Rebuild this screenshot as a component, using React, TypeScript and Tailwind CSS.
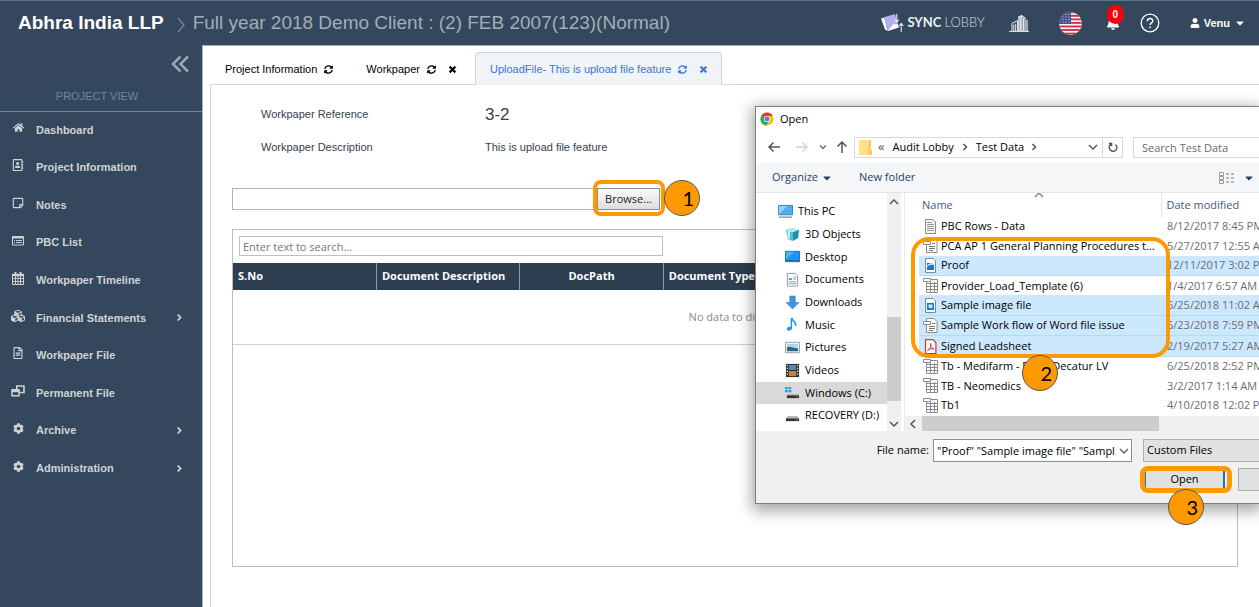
import type { ReactNode } from "react";
import {
  FaHome,
  FaRegAddressBook,
  FaRegStickyNote,
  FaCubes,
  FaRegFileAlt,
  FaCog,
  FaAngleRight,
  FaSyncAlt,
  FaTimes,
  FaBell,
  FaUser,
  FaCaretDown,
} from "react-icons/fa";

function WindowsIcon() {
  return (
    <svg viewBox="0 0 14 12" className="h-3 w-[14px]" fill="none" stroke="currentColor">
      <path d="M5.800 1h7.200v6.500H5.800z" strokeWidth="1.600" />
      <path d="M1 4.800h7v6H1z" strokeWidth="1.500" fill="#34475d" />
      <path d="M1 6h7" strokeWidth="2.400" />
    </svg>
  );
}

function ListIcon() {
  return (
    <svg viewBox="0 0 12 10" className="h-[10px] w-3" fill="none" stroke="currentColor">
      <path d="M.5.5h11v8.500H.5z" />
      <path d="M0 1.500h12" strokeWidth="2" />
      <path d="M2 4.500h1M4 4.500h6M2 6.500h1M4 6.500h6" />
    </svg>
  );
}

function CalendarIcon() {
  return (
    <svg viewBox="0 0 12 13" className="h-[13px] w-3" fill="none" stroke="currentColor">
      <path d="M.5 2.500h11v10H.5z" />
      <path d="M0 3h12" strokeWidth="2.400" />
      <path d="M3.500 0v3M8.500 0v3" strokeWidth="2" />
      <path d="M1 6.500h10M1 9.500h10M3.500 4v8M6 4v8M8.500 4v8" strokeWidth=".9" />
    </svg>
  );
}

const menu: { label: string; icon: ReactNode; sub?: boolean }[] = [
  { label: "Dashboard", icon: <FaHome size={11} /> },
  { label: "Project Information", icon: <FaRegAddressBook size={12} /> },
  { label: "Notes", icon: <FaRegStickyNote size={12} /> },
  { label: "PBC List", icon: <ListIcon /> },
  { label: "Workpaper Timeline", icon: <CalendarIcon /> },
  { label: "Financial Statements", icon: <FaCubes size={14} />, sub: true },
  { label: "Workpaper File", icon: <FaRegFileAlt size={12} /> },
  { label: "Permanent File", icon: <WindowsIcon /> },
  { label: "Archive", icon: <FaCog size={11} />, sub: true },
  { label: "Administration", icon: <FaCog size={11} />, sub: true },
];

function SyncLogo() {
  return (
    <svg viewBox="0 0 23 20" className="h-5 w-[23px]">
      <path d="M0 5.500 3.500 4.400 6.500 18 4 16.500z" fill="#fff" />
      <path d="M3 4.200 14 1l3.800 13.600L6.600 18z" fill="#b3aef0" />
      <path d="M6.600 18 17.800 14.600 16.800 11 12 11.500z" fill="#fff" />
      <path d="M15.800 1v8M13.600 6.600l2.200 2.600L18 6.600M20.200 19v-8.400M18 13l2.200-2.600 2.200 2.600" fill="none" stroke="#e8ebf0" strokeWidth="1.100" />
    </svg>
  );
}

function Buildings() {
  return (
    <svg viewBox="0 0 20 17" className="h-[17px] w-5" fill="none" stroke="#e9edf1">
      <path d="M0 16.400h20" strokeWidth="1" />
      <path d="M3 16V8.400L8.600 5.600V16M4.800 9.600V16M6.700 8.600V16" strokeWidth="1" />
      <path d="M9.800 16V2l3-1.400V16M11.300 2v14" strokeWidth="1.200" />
      <path d="M12.800 1l3.200 2v13M14.400 3v13M18 5v11" strokeWidth="1.200" />
    </svg>
  );
}

function Flag() {
  const stars = [4, 7, 10];
  return (
    <svg viewBox="0 0 23 23" className="size-[23px]">
      <clipPath id="flag-round">
        <circle cx="11.5" cy="11.5" r="11.3" />
      </clipPath>
      <g clipPath="url(#flag-round)">
        <rect width="23" height="23" fill="#f7f3f5" />
        {[0, 1, 2, 3, 4, 5, 6].map((i) => (
          <rect key={i} x="0" y={i * 3.54 - 0.6} width="23" height="1.8" fill="#d22c45" />
        ))}
        <rect width="12" height="12" fill="#46518c" />
        {[2.5, 5, 7.5, 10].map((y) => stars.map((x) => <circle key={`${x}-${y}`} cx={x} cy={y} r=".6" fill="#dfe3f3" />))}
      </g>
    </svg>
  );
}

function Header() {
  return (
    <header className="flex h-[45px] shrink-0 items-center border-t border-[#5d7485] bg-[#34475d] pr-[13px] pl-[18px]">
      <h1 className="text-[19px] font-bold whitespace-nowrap text-white">Abhra India LLP</h1>
      <svg viewBox="0 0 8 16" className="mt-1 mr-2 ml-[13px] h-4 w-2 shrink-0" fill="none" stroke="#7b8998">
        <path d="m1 1 6 7-6 7" strokeWidth="1.200" />
      </svg>
      <span className="text-[19px] whitespace-nowrap text-[#a3adb7]">
        Full year 2018 Demo Client : (2) FEB 2007(123)(Normal)
      </span>
      <div className="ml-auto flex shrink-0 items-center text-white">
        <a href="#lobby" className="flex items-center gap-[3px] font-['Lato',sans-serif] text-[13px]">
          <SyncLogo />
          <span className="font-bold text-[#eceff2]">
            SYNC <span className="font-light text-[#d3d9e0]">LOBBY</span>
          </span>
        </a>
        <button aria-label="Company" className="ml-6">
          <Buildings />
        </button>
        <button aria-label="Language" className="ml-[30px]">
          <Flag />
        </button>
        <button aria-label="Notifications" className="relative ml-6">
          <FaBell size={14} />
          <span className="absolute -top-[11px] left-[1px] flex h-[19px] w-[17px] items-center justify-center rounded-full bg-[#fb0007] text-[10px] font-bold">
            0
          </span>
        </button>
        <button aria-label="Help" className="ml-5">
          <svg viewBox="0 0 20 20" className="size-5" fill="none" stroke="#fff">
            <circle cx="10" cy="10" r="8.8" strokeWidth="1.300" />
            <path d="M7.300 8.200c0-3.600 5.500-3.500 5.500-.3 0 2-2.700 2-2.700 4.200" strokeWidth="1.400" />
            <path d="M10.100 13.400v1.600" strokeWidth="1.500" />
          </svg>
        </button>
        <button className="ml-[30px] flex items-center gap-1 text-[11px] font-bold">
          <FaUser size={10} />
          Venu
          <FaCaretDown size={12} />
        </button>
      </div>
    </header>
  );
}

function Sidebar() {
  return (
    <aside className="flex w-[203px] shrink-0 flex-col border-r border-[#aab8c4] bg-[#34475d]">
      <div className="flex h-[38px] items-center justify-end pr-[13px]">
        <button aria-label="Collapse menu" className="text-[#98a5b3]">
          <svg viewBox="0 0 18 18" className="size-[18px]" fill="none" stroke="currentColor" strokeWidth="2.600">
            <path d="M9.500 1.500 2 9l7.500 7.500M17 1.500 9.500 9l7.500 7.500" />
          </svg>
        </button>
      </div>
      <h2 className="flex h-[29px] items-center justify-center border-b border-[#6d87a0] pr-2 pb-[2px] text-[11px] text-[#6d89a3]">
        PROJECT VIEW
      </h2>
      <nav className="flex h-[376px] flex-col">
        {menu.map((m) => (
          <a
            key={m.label}
            href="#menu"
            className="flex flex-1 items-center pr-[17px] pb-[2px] text-[11px] font-bold text-[#d0d2d4]"
          >
            <span className="flex w-9 items-center justify-center pb-1">{m.icon}</span>
            <span className="flex-1">{m.label}</span>
            {m.sub && <FaAngleRight size={11} />}
          </a>
        ))}
      </nav>
    </aside>
  );
}

function Tab({ label, closable, active }: { label: string; closable?: boolean; active?: boolean }) {
  return (
    <div
      className={
        active
          ? "-mb-px flex h-[33px] items-center gap-[7px] rounded-t border border-b-0 border-[#c6d5e3] bg-[#f0f4f8] pt-px pr-[13px] pl-[14px] text-[#3f73dc]"
          : "flex h-8 items-center gap-[7px] pt-[2px] pr-[18px] pl-[15px] text-black"
      }
    >
      <button>{label}</button>
      <button aria-label={`Refresh ${label}`}>
        <FaSyncAlt size={9} />
      </button>
      {closable && (
        <button aria-label={`Close ${label}`} className="ml-[5px]">
          <FaTimes size={9} strokeWidth={50} stroke="currentColor" />
        </button>
      )}
    </div>
  );
}

function Step({ n, className }: { n: number; className: string }) {
  return (
    <span
      className={`absolute flex size-9 items-center justify-end rounded-full border border-[#555] bg-[#ff9900] pr-[5px] font-['Lato',sans-serif] text-[20px] text-black ${className}`}
    >
      {n}
    </span>
  );
}

function UploadPage() {
  return (
    <main className="flex min-w-0 flex-1 flex-col border-t border-[#a0a8b8] bg-white pl-[7px] text-[11px]">
      <div className="flex h-[39px] items-end border-b border-[#d5dbe2]">
        <Tab label="Project Information" />
        <Tab label="Workpaper" closable />
        <Tab label="UploadFile- This is upload file feature" closable active />
      </div>
      <section className="flex flex-1 flex-col border-l border-[#c9d8e6] pr-[21px] pl-[21px]">
        <dl className="grid grid-cols-[224px_1fr] grid-rows-[33px_32px] items-center pt-[13px] pl-[29px] text-[#33424f]">
          <dt>Workpaper Reference</dt>
          <dd className="text-[17px]">3-2</dd>
          <dt>Workpaper Description</dt>
          <dd>This is upload file feature</dd>
        </dl>

        <div className="mt-[25px] flex w-[428px] font-['Open_Sans',sans-serif]">
          <input aria-label="Selected file" className="h-[22px] min-w-0 flex-1 border border-r-0 border-[#b4b4b4] px-1" />
          <div className="relative">
            <button className="h-[22px] w-[63px] border border-[#8c8c8c] bg-linear-to-b from-[#fafafa] to-[#dedede] text-[#222]">
              Browse...
            </button>
            <span className="pointer-events-none absolute -top-2 -right-[5px] -bottom-[6px] -left-1 rounded-lg border-4 border-[#ff9900]" />
            <Step n={1} className="-top-2 left-[67px]" />
          </div>
        </div>

        <div className="mt-[19px] h-[338px] border border-[#bdbdbd] font-['Open_Sans',sans-serif]">
          <div className="px-[6px] pt-[6px] pb-[7px]">
            <input
              aria-label="Search documents"
              placeholder="Enter text to search..."
              className="block h-5 w-[424px] border border-[#c0c0c0] px-[3px] text-[11px] placeholder:text-[#777]"
            />
          </div>
          <table className="w-full table-fixed border-collapse">
            <thead>
              <tr className="h-[27px] bg-[#2c3e50] text-left font-bold text-white">
                <th className="border-r border-[#8d979f] px-[5px]">S.No</th>
                <th className="border-r border-[#8d979f] px-[5px] whitespace-nowrap">Document Description</th>
                <th className="border-r border-[#8d979f] px-[5px] text-center">DocPath</th>
                <th className="border-r border-[#8d979f] px-[5px]">Document Type</th>
                <th className="border-r border-[#8d979f]" />
                <th className="border-r border-[#8d979f]" />
                <th />
              </tr>
            </thead>
            <tbody>
              <tr className="h-[54px] border-b border-[#cfcfcf]">
                <td colSpan={7} className="text-center text-[#8a8a8a]">
                  No data to display
                </td>
              </tr>
            </tbody>
          </table>
        </div>
      </section>
    </main>
  );
}

type Kind = "text" | "word" | "png" | "sheet" | "image" | "pdf";

function FileIcon({ kind }: { kind: Kind }) {
  return (
    <svg viewBox="0 0 15 15" className="size-[15px] shrink-0" fill="none">
      {kind === "text" && (
        <>
          <path d="M2.500.5h7.500l2.500 2.500v11.500h-10z" fill="#f4f4f4" stroke="#8b8b8b" />
          <path d="M4 3.500h5M4 5.500h7M4 7.500h7M4 9.500h7M4 11.500h7" stroke="#999" />
        </>
      )}
      {kind === "word" && (
        <>
          <path d="M3.500.5h7.500l3 3v11h-10.500z" fill="#fff" stroke="#8b8b8b" />
          <path d="M.5 3.500h7v3h-7z" fill="#fff" stroke="#8b8b8b" />
          <path d="M6 8.500h6M6 10.500h6M6 12.500h4M9 5.500h3" stroke="#777" />
        </>
      )}
      {kind === "sheet" && (
        <>
          <path d="M3.500 1.500h11v13h-11z" fill="#fff" stroke="#8b8b8b" />
          <path d="M3.500 5.500h11M3.500 8.500h11M3.500 11.500h11M7.500 4v10.500M11.500 4v10.500" stroke="#8b8b8b" />
          <path d="M.5.5h7v3h-7z" fill="#fff" stroke="#8b8b8b" />
        </>
      )}
      {(kind === "image" || kind === "png") && (
        <>
          <path d="M2.500.5h7.500l2.500 2.500v11.500h-10z" fill="#fff" stroke="#7d8b99" />
          <path d="M4 5h7v7H4z" fill="#1a76c9" />
          {kind === "png" ? (
            <path d="M4 8c2-3 4-3 7-3v2c-3-.5-5 0-7 2z" fill="#d5ebfc" />
          ) : (
            <path d="M5.500 6.500h4v3l-2 1-2-1.500z" fill="#d5ebfc" />
          )}
        </>
      )}
      {kind === "pdf" && (
        <>
          <path d="M2.500.6h7.500l2.900 3v10.900H2.500z" fill="#fff" stroke="#e3302f" strokeWidth="1.200" />
          <path d="M4.400 11.400c3-1.500 4-4.500 3-7 .2 3.500 1.600 5 3.800 5.400-2.600-.5-5 .2-6.800 1.600z" stroke="#e3302f" />
        </>
      )}
    </svg>
  );
}

const files: { name: string; date: string; kind: Kind; selected?: boolean }[] = [
  { name: "PBC Rows - Data", date: "8/12/2017 8:45 PM", kind: "text" },
  { name: "PCA AP 1 General Planning Procedures t...", date: "5/27/2017 12:55 AM", kind: "word" },
  { name: "Proof", date: "12/11/2017 3:02 PM", kind: "png", selected: true },
  { name: "Provider_Load_Template (6)", date: "1/4/2017 6:57 AM", kind: "sheet" },
  { name: "Sample image file", date: "6/25/2018 11:02 AM", kind: "image", selected: true },
  { name: "Sample Work flow of Word file issue", date: "6/23/2018 7:59 PM", kind: "word", selected: true },
  { name: "Signed Leadsheet", date: "2/19/2017 5:27 AM", kind: "pdf", selected: true },
  { name: "Tb - Medifarm - Fixed Decatur LV", date: "6/25/2018 2:52 PM", kind: "sheet" },
  { name: "TB - Neomedics", date: "3/2/2017 1:14 AM", kind: "sheet" },
  { name: "Tb1", date: "4/10/2018 12:02 PM", kind: "sheet" },
];

const places: { name: string; art: ReactNode; root?: boolean; selected?: boolean }[] = [
  {
    name: "This PC",
    root: true,
    art: (
      <>
        <path d="M.5 1.500h15v10H.5z" fill="#47b2f2" stroke="#3f7fae" />
        <path d="M1 11V2h9z" fill="#8fd3fa" />
        <path d="M1 14h14" stroke="#7f9bb0" strokeWidth="1.500" />
      </>
    ),
  },
  {
    name: "3D Objects",
    art: (
      <>
        <path d="m1 3 7-2 7 2-7 2z" fill="#a9e6ef" />
        <path d="m1 3 7 2.500V15l-5-2z" fill="#4fc3d6" />
        <path d="m15 3-7 2.500V15l6-3z" fill="#1794ab" />
        <path d="m3 3.500 2 .7v8.500l-2-.8z" fill="#d9f6fa" />
      </>
    ),
  },
  {
    name: "Desktop",
    art: (
      <>
        <path d="M.5 2.500h15v11H.5z" fill="#1b97f0" stroke="#0f6fb8" />
        <path d="M1 3h9L1 11z" fill="#4bb3f8" />
        <path d="M1 12.500h14" stroke="#0a5fa5" />
      </>
    ),
  },
  {
    name: "Documents",
    art: (
      <>
        <path d="M2.500 1.500h8.500l2.500 2.500v11h-11z" fill="#fff" stroke="#8b959d" />
        <path d="M4 6.500h3.500v2H4z" fill="#4c9ad4" />
        <path d="M9 5.500h3M9 7.500h3M4 10.500h8M4 12.500h8" stroke="#6fa4c9" />
      </>
    ),
  },
  { name: "Downloads", art: <path d="M5 1h6v7h4l-7 7-7-7h4z" fill="#3d94e0" stroke="#2b7cc4" strokeWidth=".5" /> },
  {
    name: "Music",
    art: (
      <>
        <path d="M7.500 1v11c0 3-5.500 3.500-5.500.8C2 10.800 4.500 10 6 10.600V1z" fill="#169bea" />
        <path d="M7 1c1 3.500 5 3.500 4.500 8.500" stroke="#169bea" strokeWidth="1.800" />
      </>
    ),
  },
  {
    name: "Pictures",
    art: (
      <>
        <path d="M.5 2.500h15v11H.5z" fill="#fff" stroke="#9a9a9a" />
        <path d="M2 4h12v8H2z" fill="#a9d6f2" />
        <path d="M2 8c3-2 6 1 12 1v3H2z" fill="#35657f" />
      </>
    ),
  },
  {
    name: "Videos",
    art: (
      <>
        <path d="M1 1h14v14H1z" fill="#2a2d33" />
        <path d="M4 2h8v5.500H4z" fill="#5b86b8" />
        <path d="M4 8.500h8V14H4z" fill="#c0862f" />
        <path d="M2.500 2v12M13.500 2v12" stroke="#e8e8e8" strokeWidth="1.200" strokeDasharray="1.500 1.500" />
      </>
    ),
  },
  {
    name: "Windows (C:)",
    selected: true,
    art: (
      <>
        <path d="M0 2h3v2.500H0zM3.700 2h3v2.500h-3zM0 5.200h3v2.500H0zM3.700 5.200h3v2.500h-3z" fill="#1fa5e8" />
        <path d="M3 9.500h11l1 1.500H2z" fill="#b9b9b9" />
        <path d="M2 11h13v3H2z" fill="#333" />
        <path d="M12 12.500h1.500" stroke="#3fe03f" />
      </>
    ),
  },
  {
    name: "RECOVERY (D:)",
    art: (
      <>
        <path d="M3 8.500h10l2 2.500H1z" fill="#b9b9b9" />
        <path d="M1 11h14v3H1z" fill="#333" />
        <path d="M12 12.500h1.500" stroke="#3fe03f" />
      </>
    ),
  },
];

function Chevron({ dir, className }: { dir: "down" | "up" | "left" | "right"; className?: string }) {
  const d = { down: "m1 3 4 4 4-4", up: "m1 7 4-4 4 4", left: "M7 1 3 5l4 4", right: "m3.500 2 3 3-3 3" }[dir];
  return (
    <svg viewBox="0 0 10 10" className={`size-[10px] shrink-0 ${className ?? ""}`} fill="none" stroke="currentColor" strokeWidth="1.500">
      <path d={d} />
    </svg>
  );
}

function Arrow({ className }: { className: string }) {
  return (
    <svg viewBox="0 0 12 12" className={`size-3 ${className}`} fill="none" stroke="currentColor" strokeWidth="1.500">
      <path d="M12 6H1M5.500 1.500 1 6l4.500 4.500" />
    </svg>
  );
}

function OpenDialog() {
  return (
    <div
      role="dialog"
      aria-label="Open"
      className="absolute top-[106px] right-0 left-[755px] border border-r-0 border-[#7f7f7f] bg-white font-['Open_Sans',sans-serif] text-[11px] text-black shadow-[0_4px_14px_3px_rgba(0,0,0,0.35)]"
    >
      <div className="flex h-6 items-center gap-[6px] pl-1">
        <svg viewBox="0 0 14 14" className="size-[14px]">
          <circle cx="7" cy="7" r="6.5" fill="#fbc116" />
          <path d="M7 7 1.400 3.700A6.500 6.500 0 0 1 12.700 4H7z" fill="#e33b2e" />
          <path d="M1.400 3.700A6.500 6.500 0 0 0 6.300 13.500L9 8.500 7 7z" fill="#2da94f" />
          <circle cx="7" cy="7" r="3.1" fill="#fff" />
          <circle cx="7" cy="7" r="2.4" fill="#3e82f1" />
        </svg>
        <span>Open</span>
      </div>

      <div className="flex h-8 items-center overflow-hidden text-[#555]">
        <button aria-label="Back" className="ml-3">
          <Arrow className="" />
        </button>
        <button aria-label="Forward" className="ml-4 text-[#d0d0d0]">
          <Arrow className="rotate-180" />
        </button>
        <button aria-label="Recent locations" className="ml-[10px]">
          <Chevron dir="down" className="scale-75" />
        </button>
        <button aria-label="Up" className="ml-2">
          <Arrow className="rotate-90" />
        </button>
        <div className="ml-[6px] flex h-[21px] w-[269px] shrink-0 items-center border border-[#d9d9d9]">
          <svg viewBox="0 0 13 15" className="ml-1 h-[15px] w-[13px]">
            <path d="M0 0h10v15H0z" fill="#ffe08a" />
            <path d="M10 0h2v10h1v5H9z" fill="#f5cb5c" />
          </svg>
          <span className="ml-[6px] text-[13px]">«</span>
          <span className="ml-2 text-black">Audit Lobby</span>
          <Chevron dir="right" className="mx-[6px]" />
          <span className="text-black">Test Data</span>
          <Chevron dir="right" className="ml-[5px]" />
          <button aria-label="Previous locations" className="ml-auto pr-1">
            <Chevron dir="down" />
          </button>
          <button aria-label="Reload" className="flex h-full w-5 items-center justify-center border-l border-[#d9d9d9]">
            <svg viewBox="0 0 10 10" className="size-[10px]" fill="none" stroke="currentColor" strokeWidth="1.400">
              <path d="M7.500 2.500A3.800 3.800 0 1 1 3 2.200M1 1.500h2.600V4" />
            </svg>
          </button>
        </div>
        <input
          aria-label="Search Test Data"
          placeholder="Search Test Data"
          className="ml-[10px] h-[21px] min-w-0 flex-1 border border-r-0 border-[#d9d9d9] pl-2 placeholder:text-[#6b6b6b]"
        />
      </div>

      <div className="flex h-[30px] items-center border-b border-[#e4e6e9] bg-[#f5f6f8] pl-4 text-[#26436e]">
        <button className="flex items-center gap-[3px]">
          Organize
          <FaCaretDown size={12} />
        </button>
        <button className="ml-[26px]">New folder</button>
        <button aria-label="Change view" className="ml-auto flex items-center gap-2 pr-[4px]">
          <svg viewBox="0 0 16 12" className="h-3 w-4" fill="none">
            <path d="M.5.5h4v3h-4zM.5 4.500h4v3h-4zM.5 8.500h4v3h-4z" stroke="#9a9a9a" />
            <path d="M7 2h3M12 2h3M7 6h3M12 6h3M7 10h3M12 10h3" stroke="#777" />
          </svg>
          <FaCaretDown size={12} />
        </button>
      </div>

      <div className="flex h-[238px]">
        <ul className="flex h-[234px] w-[131px] shrink-0 flex-col pt-[7px]">
          {places.map((p) => (
            <li key={p.name} className={`flex flex-1 ${p.selected ? "bg-[#d9d9d9]" : ""}`}>
              <button className={`flex w-full items-center gap-[5px] whitespace-nowrap ${p.root ? "pl-[22px]" : "pl-[29px]"}`}>
                <svg viewBox="0 0 16 16" className="size-[15px] shrink-0" fill="none">
                  {p.art}
                </svg>
                {p.name}
              </button>
            </li>
          ))}
        </ul>
        <div className="flex w-[14px] flex-col items-center bg-[#f0f0f0] pt-1 pb-[2px] text-[#555]">
          <Chevron dir="up" />
          <span className="mt-[110px] h-[84px] w-full bg-[#cdcdcd]" />
          <Chevron dir="down" className="mt-auto" />
        </div>
        <div className="ml-[3px] flex min-w-0 flex-1 flex-col border-l border-[#ececec]">
          <div className="relative flex-1 overflow-hidden pl-[14px]">
            <Chevron dir="up" className="absolute -top-[3px] left-[129px] text-[#888]" />
            <table className="h-[222px] w-full table-fixed border-collapse whitespace-nowrap">
              <colgroup>
                <col className="w-[242px]" />
                <col />
              </colgroup>
              <thead>
                <tr className="h-6 text-left text-[#44597a]">
                  <th className="pl-[3px] font-normal">Name</th>
                  <th className="border-l border-[#e5e5e5] pl-[5px] font-normal">Date modified</th>
                </tr>
              </thead>
              <tbody>
                {files.map((f) => (
                  <tr key={f.name} className={f.selected ? "border-b border-[#b3daf9] bg-[#cce8ff]" : ""}>
                    <td className="pl-1">
                      <span className="flex items-center gap-[3px]">
                        <FileIcon kind={f.kind} />
                        {f.name}
                      </span>
                    </td>
                    <td className="overflow-hidden pl-[6px] text-[#6d6d6d]">{f.date}</td>
                  </tr>
                ))}
              </tbody>
            </table>
          </div>
          <div className="flex h-[15px] items-center bg-[#f0f0f0] pl-[3px] text-[#555]">
            <Chevron dir="left" />
            <span className="ml-1 h-full w-[237px] bg-[#cdcdcd]" />
          </div>
        </div>
      </div>

      <div className="h-[72px] overflow-hidden bg-[#f0f0f0] pt-2">
        <div className="flex items-center">
          <label htmlFor="file-name" className="w-[173px] shrink-0 text-right">
            File name:
          </label>
          <div className="relative ml-1 shrink-0">
            <input
              id="file-name"
              defaultValue={'"Proof" "Sample image file" "Sampl'}
              className="block h-[23px] w-[199px] border border-[#8f8f8f] bg-white pr-4 pl-[3px]"
            />
            <Chevron dir="down" className="absolute top-[7px] right-[3px] text-[#666]" />
          </div>
          <select
            aria-label="File type"
            className="ml-[11px] h-[23px] min-w-0 flex-1 appearance-none border border-r-0 border-[#adadad] bg-[#e1e1e1] pl-[3px]"
          >
            <option>Custom Files</option>
          </select>
        </div>
        <div className="mt-[6px] flex items-center pl-[388px]">
          <button className="block h-[21px] w-[81px] border-x-2 border-[#0f78d4] bg-[#e1e1e1]">Open</button>
          <button aria-label="Cancel" className="ml-[13px] h-[23px] flex-1 border border-r-0 border-[#adadad] bg-[#e1e1e1]" />
        </div>
      </div>

      <span className="pointer-events-none absolute top-[130px] left-[155px] h-[121px] w-[259px] rounded-[18px] border-4 border-[#ff9900]" />
      <span className="pointer-events-none absolute top-[359px] left-[384px] h-[27px] w-[92px] rounded-lg border-[5px] border-[#ff9900]" />
      <Step n={2} className="top-[248px] left-[266px]" />
      <Step n={3} className="top-[382px] left-[412px]" />
    </div>
  );
}

export default function App() {
  return (
    <div className="relative flex min-h-screen flex-col overflow-hidden font-['Liberation_Sans',Arial,sans-serif]">
      <Header />
      <div className="flex flex-1">
        <Sidebar />
        <UploadPage />
      </div>
      <OpenDialog />
    </div>
  );
}
